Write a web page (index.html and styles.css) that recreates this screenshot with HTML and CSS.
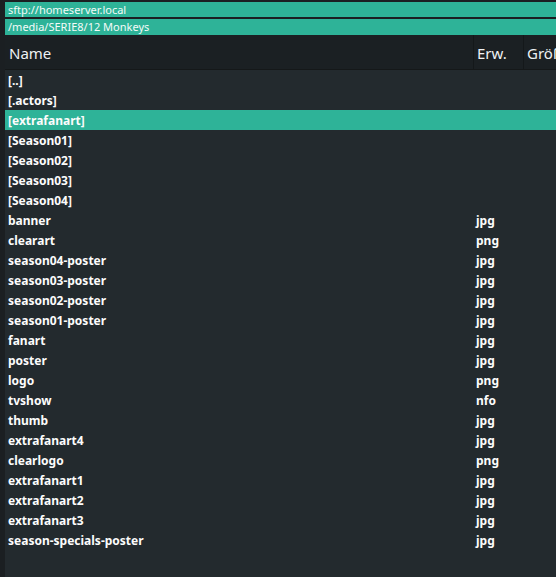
FILE: index.html
```html
<!DOCTYPE html>
<html>
<head>
<meta charset="utf-8">
<link rel="stylesheet" href="styles.css">
</head>
<body>
<div class="pane">
  <div class="bar host">sftp://homeserver.local</div>
  <div class="bar path">/media/SERIE8/12 Monkeys</div>
  <div class="header">
    <div class="col name">Name</div>
    <div class="col ext">Erw.</div>
    <div class="col size">Größe</div>
  </div>
  <div class="list">
    <div class="row"><span class="n">[..]</span><span class="e"></span></div>
    <div class="row"><span class="n">[.actors]</span><span class="e"></span></div>
    <div class="row sel"><span class="n">[extrafanart]</span><span class="e"></span></div>
    <div class="row"><span class="n">[Season01]</span><span class="e"></span></div>
    <div class="row"><span class="n">[Season02]</span><span class="e"></span></div>
    <div class="row"><span class="n">[Season03]</span><span class="e"></span></div>
    <div class="row"><span class="n">[Season04]</span><span class="e"></span></div>
    <div class="row"><span class="n">banner</span><span class="e">jpg</span></div>
    <div class="row"><span class="n">clearart</span><span class="e">png</span></div>
    <div class="row"><span class="n">season04-poster</span><span class="e">jpg</span></div>
    <div class="row"><span class="n">season03-poster</span><span class="e">jpg</span></div>
    <div class="row"><span class="n">season02-poster</span><span class="e">jpg</span></div>
    <div class="row"><span class="n">season01-poster</span><span class="e">jpg</span></div>
    <div class="row"><span class="n">fanart</span><span class="e">jpg</span></div>
    <div class="row"><span class="n">poster</span><span class="e">jpg</span></div>
    <div class="row"><span class="n">logo</span><span class="e">png</span></div>
    <div class="row"><span class="n">tvshow</span><span class="e">nfo</span></div>
    <div class="row"><span class="n">thumb</span><span class="e">jpg</span></div>
    <div class="row"><span class="n">extrafanart4</span><span class="e">jpg</span></div>
    <div class="row"><span class="n">clearlogo</span><span class="e">png</span></div>
    <div class="row"><span class="n">extrafanart1</span><span class="e">jpg</span></div>
    <div class="row"><span class="n">extrafanart2</span><span class="e">jpg</span></div>
    <div class="row"><span class="n">extrafanart3</span><span class="e">jpg</span></div>
    <div class="row"><span class="n">season-specials-poster</span><span class="e">jpg</span></div>
  </div>
</div>
</body>
</html>
```
FILE: styles.css
```css
html, body {
  margin: 0;
  padding: 0;
  height: 100%;
  overflow: hidden;
}
body {
  background: #1b1f22;
  font-family: "Noto Sans", "Open Sans", sans-serif;
  color: #fcfcfc;
  padding: 2px 0 0 5px;
  box-sizing: border-box;
}
.pane {
  display: flex;
  flex-direction: column;
  height: 100%;
}
.bar {
  background: #2eb398;
  color: #f4fbf9;
  font-size: 11px;
  line-height: 15px;
  height: 15px;
  padding-left: 3px;
  white-space: nowrap;
}
.bar.path {
  margin-top: 2px;
  height: 16px;
  line-height: 16px;
}
.header {
  display: flex;
  height: 34px;
  background: #1b2023;
  border-bottom: 1px solid #151819;
  font-size: 15px;
  color: #eef1f3;
  white-space: nowrap;
}
.col {
  display: flex;
  align-items: center;
  padding-left: 4px;
  padding-top: 2px;
  box-sizing: border-box;
  flex-shrink: 0;
}
.col.name {
  width: 468px;
}
.col.ext {
  width: 50px;
  border-left: 1px solid #14181a;
  padding-left: 3px;
}
.col.size {
  flex: 1;
  border-left: 1px solid #14181a;
  padding-left: 3px;
  overflow: hidden;
}
.list {
  flex: 1;
  background: #232a2e;
}
.row {
  display: flex;
  height: 20px;
  box-sizing: border-box;
  padding-top: 2px;
  line-height: 18px;
  font-size: 12px;
  font-weight: 700;
  white-space: nowrap;
}
.row.sel {
  background: #2eb398;
}
.row .n {
  width: 465px;
  padding-left: 3px;
}
.row .e {
  padding-left: 3px;
}
```
